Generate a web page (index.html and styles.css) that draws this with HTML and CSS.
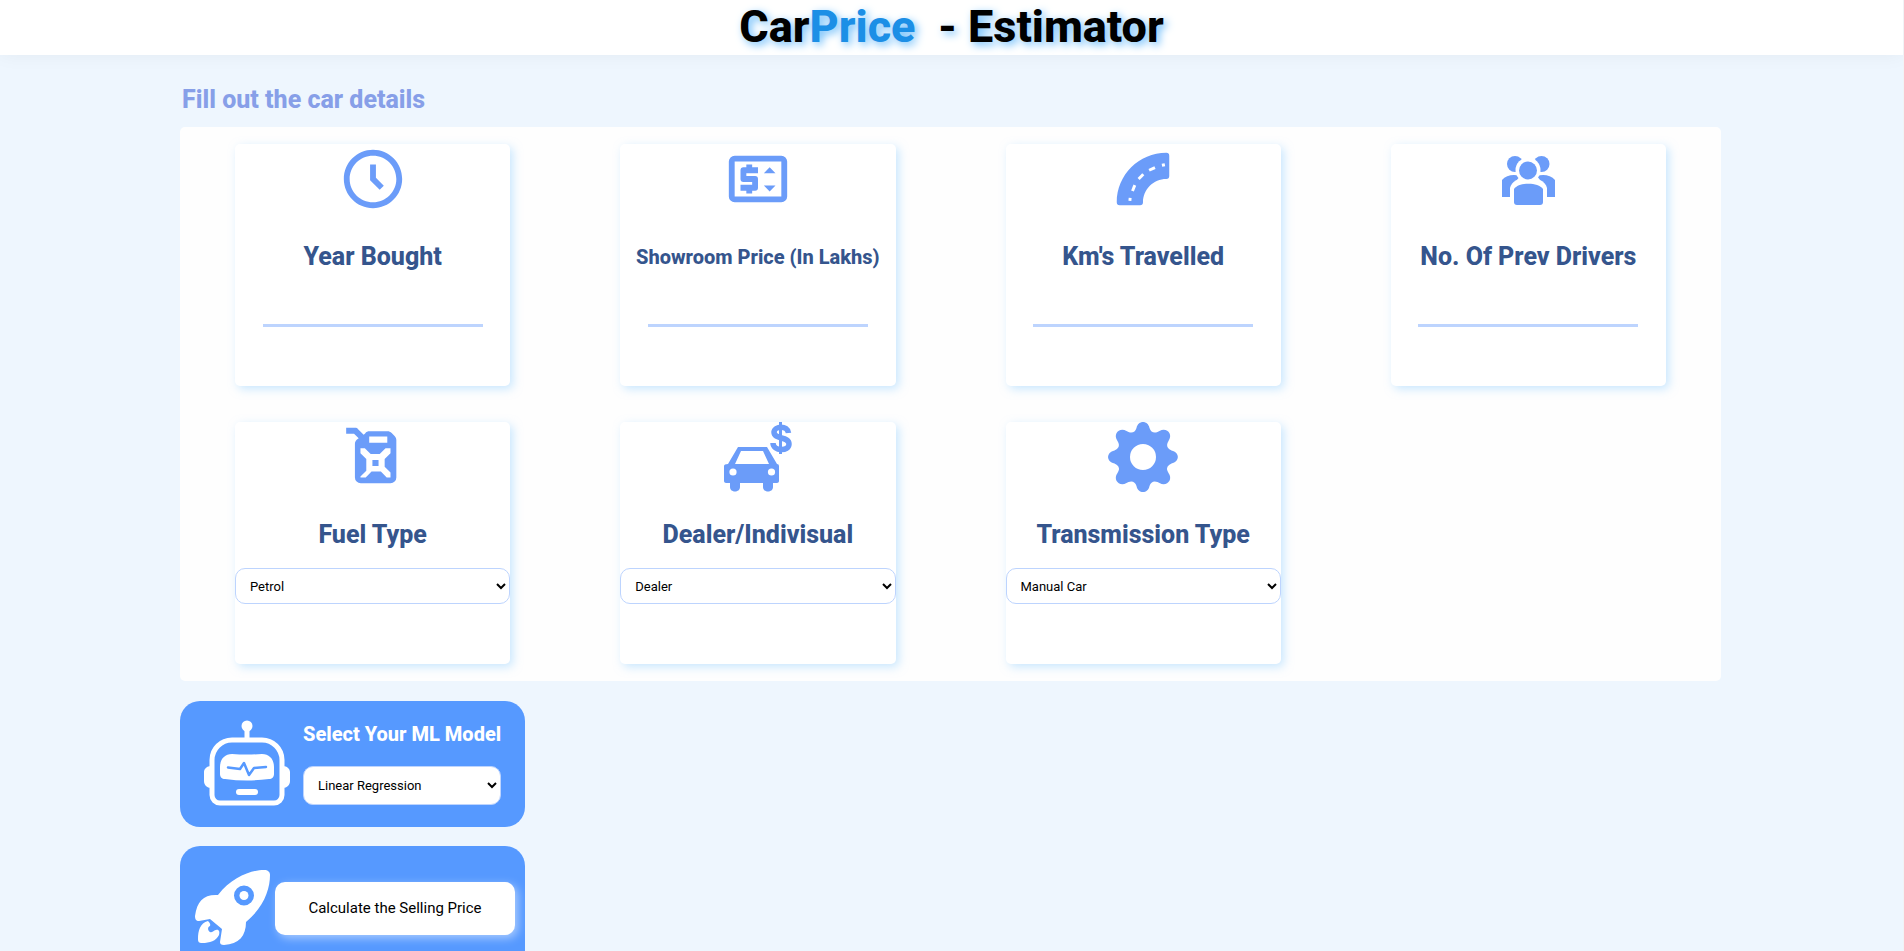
FILE: index.html
```html
<!DOCTYPE html>
<html lang="en">
<head>
<meta charset="utf-8">
<meta name="viewport" content="width=device-width, initial-scale=1">
<title>CarPrice - Estimator</title>
<link rel="stylesheet" href="styles.css">
</head>
<body>
<header class="header">
  <h1 class="brand">Car<span class="brand-accent">Price</span>&nbsp; - Estimator</h1>
</header>
<main class="content">
  <h2 class="section-title">Fill out the car details</h2>
  <form id="details" class="panel">
    <div class="card">
      <svg class="icon" viewBox="0 0 24 24" aria-hidden="true"><path d="M12 2C6.486 2 2 6.486 2 12s4.486 10 10 10 10-4.486 10-10S17.514 2 12 2zm0 18c-4.411 0-8-3.589-8-8s3.589-8 8-8 8 3.589 8 8-3.589 8-8 8z"/><path d="M13 7h-2v5.414l3.293 3.293 1.414-1.414L13 11.586z"/></svg>
      <label class="card-label" for="year">Year Bought</label>
      <input class="line-input" id="year" type="text">
    </div>
    <div class="card">
      <svg class="icon" viewBox="0 0 24 24" aria-hidden="true"><path fill-rule="evenodd" d="M4 4h16a2 2 0 0 1 2 2v12a2 2 0 0 1-2 2H4a2 2 0 0 1-2-2V6a2 2 0 0 1 2-2zm0 2v12h16V6z"/><path d="M8 17h2v-1h1a1 1 0 0 0 1-1v-3a1 1 0 0 0-1-1H8v-1h4V8h-2V7H8v1H7a1 1 0 0 0-1 1v3a1 1 0 0 0 1 1h3v1H6v2h2zM14 10l2-2 2 2zM14 14.25l2 2 2-2z"/></svg>
      <label class="card-label card-label-small" for="price">Showroom Price (In Lakhs)</label>
      <input class="line-input" id="price" type="text">
    </div>
    <div class="card">
      <svg class="icon" viewBox="0 0 24 24" aria-hidden="true"><path d="M20 3C10.600 3 3 10.600 3 20a1 1 0 0 0 1 1h7a1 1 0 0 0 1-1c0-4.400 3.600-8 8-8a1 1 0 0 0 1-1V4a1 1 0 0 0-1-1z"/><g class="road-marks"><path d="M7.500 19.500 7.600 18.500"/><path d="M8.400 16.100 9.200 14.100"/><path d="M10.500 12 12.100 10.400"/><path d="M14.100 9 16.100 8.100"/><path d="M18.500 7.300 19.500 7.100"/></g></svg>
      <label class="card-label" for="kms">Km's Travelled</label>
      <input class="line-input" id="kms" type="text">
    </div>
    <div class="card">
      <svg class="icon" viewBox="0 0 70 70" aria-hidden="true"><circle cx="22" cy="20" r="8"/><circle cx="48.500" cy="20" r="8"/><path d="M9 53V36c4-5 12-6 18-4l-6 8-4 5v8zM62 53V36c-4-5-12-6-18-4l6 8 4 5v8z"/><path class="cutout" d="M17 58V44c3-14 34-14 37 0v14z"/><circle class="cutout" cx="35" cy="26" r="12.500"/><circle cx="35" cy="26.500" r="9"/><path d="M21 45c5-7 24-7 29 0v13c0 2-1 3-3 3H24c-2 0-3-1-3-3z"/></svg>
      <label class="card-label" for="drivers">No. Of Prev Drivers</label>
      <input class="line-input" id="drivers" type="text">
    </div>
    <div class="card">
      <svg class="icon" viewBox="0 0 24 24" aria-hidden="true"><path fill-rule="evenodd" d="M2.800 2h3.100c.400 0 .700.100.900.400l2 2 .500-.500c.400-.500.900-.700 1.500-.700h6.200c.500 0 1 .200 1.400.600l1 1c.400.400.600.900.600 1.400V19a2 2 0 0 1-2 2H7.800a2 2 0 0 1-2-2V7.600c0-.600.200-1.100.600-1.500l.700-.500L5.500 4H2.800zM10.700 5v2.100h6.200V5zM9.300 9H7.700v1.700l2 2v4l-2 2V19h1.800l2-2h3.200l2 2h1.300v-1.700l-2-2v-2.600l2-2V9h-1.700l-2 2h-3.100l-2-2z"/><path d="M11.800 13h2.100v2.100h-2.100z"/></svg>
      <label class="card-label" for="fuel">Fuel Type</label>
      <select class="select" id="fuel"><option>Petrol</option><option>Diesel</option><option>CNG</option></select>
    </div>
    <div class="card">
      <svg class="icon" viewBox="0 0 70 70" aria-hidden="true"><path fill-rule="evenodd" d="M16 25h28l10 17q2 0 2 2v15c0 1-1 2-2 2h-4v4c0 6-10 6-10 0v-4H17v4c0 6-10 6-10 0v-4H3c-1 0-2-1-2-2V44q0-2 4-2l10-17zm2 4-6 13h34l-6-13z"/><circle class="cutout" cx="10" cy="50" r="3.600"/><circle class="cutout" cx="48.500" cy="50" r="3.600"/><path class="dollar" d="M65.500 11c-1-8-14-7-14.500-1 0 8 15 4 15 12 0 8-16 7-16-1"/><path class="dollar-bar" d="M57.500 0v32"/></svg>
      <label class="card-label" for="seller">Dealer/Indivisual</label>
      <select class="select" id="seller"><option>Dealer</option><option>Individual</option></select>
    </div>
    <div class="card">
      <svg class="icon" viewBox="0 0 70 70" aria-hidden="true"><path fill-rule="evenodd" d="M28.500 6C30-2 40-2 41.500 6q2 6 8 4l2-1c7-4 14 3 9 10l-1 2q-2 5 4 7.500C72 30 72 40 63.500 41.500q-6 2.500-4 7.500l1 2c5 7-2 14-9 10l-2-1q-6-2-8 4C40 72 30 72 28.500 64q-2-6-8-4l-2 1c-7 4-14-3-9-10l1-2q2-5-4-7.500C-2 40-2 30 6.500 28.500q6-2.500 4-7.500l-1-2c-5-7 2-14 9-10l2 1q6 2 8-4zM35 22a13 13 0 1 0 0 26 13 13 0 0 0 0-26z"/></svg>
      <label class="card-label" for="transmission">Transmission Type</label>
      <select class="select" id="transmission"><option>Manual Car</option><option>Automatic Car</option></select>
    </div>
  </form>
  <section class="action model">
    <svg class="action-icon robot" viewBox="0 0 86 86" aria-hidden="true"><circle cx="43" cy="6" r="5.500"/><path d="M40.500 8h5v12h-5zM7 46c-4 0-7 3-7 6v9c0 4 3 7 7 7zM79 46c4 0 7 3 7 6v9c0 4-3 7-7 7z"/><path class="robot-face" d="M8 40a20 20 0 0 1 20-20h30a20 20 0 0 1 20 20v35a8 8 0 0 1-8 8H16a8 8 0 0 1-8-8z"/><path d="M28 34q15 1 30 0c8 0 12 6 12 13v7c0 3-2 5-5 5q-22 3-44 0c-3 0-5-2-5-5v-7c0-7 4-13 12-13z"/><rect x="32" y="69" width="22" height="6" rx="3"/><path class="pulse" d="M24 47.500 36 49l4-6 5 12 5-7 12-1"/></svg>
    <div class="model-fields">
      <label class="model-label" for="model">Select Your ML Model</label>
      <select class="select model-select" id="model" form="details"><option>Linear Regression</option><option>Random Forest</option></select>
    </div>
  </section>
  <section class="action launch">
    <svg class="action-icon rocket" viewBox="0 0 76 76" aria-hidden="true"><path fill-rule="evenodd" d="M23 25C37 7 57 0 69 0c4 0 6 2 6 5 0 14-6 32-24 47 0 14-7 22-22 23-3 0-4-1-4-3l2-13-12-10-11 2C1 51 0 49 0 46c2-15 9-22 23-21zM49 15.500a10 10 0 1 0 0 20 10 10 0 0 0 0-20z"/><circle cx="49" cy="25.500" r="4.500"/><path d="M13 51c1 1 3 3 2 5-3 1-2 5 0 6 3 1 4-2 6-2 3-1 4 2 3 5-3 6-9 8-17 8-3 0-4-1-4-4 0-8 2-16 10-18z"/></svg>
    <button class="calc-button" type="submit" form="details">Calculate the Selling Price</button>
  </section>
</main>
</body>
</html>
```
FILE: styles.css
```css
* { box-sizing: border-box; }

body {
  margin: 0;
  background: #eef6fe;
  border-right: 1px solid #f1f3f5;
  font-family: Roboto, "Liberation Sans", sans-serif;
}

.header {
  height: 55px;
  background: #fff;
  box-shadow: 0 0 20px rgba(0, 0, 0, 0.05);
  text-align: center;
}

.brand {
  margin: 0;
  color: #000;
  font-size: 45px;
  font-weight: 800;
  line-height: 53px;
  text-shadow: 3px 3px 8px #6cbcfa;
}

.brand-accent { color: #1c8fe6; }

.content {
  margin: 0 182px 0 180px;
  padding-bottom: 48px;
}

.section-title {
  margin: 0;
  padding: 30px 2px 12px;
  color: #879fe8;
  font-size: 25px;
  font-weight: 800;
  line-height: 30px;
}

.panel {
  display: grid;
  grid-template-columns: repeat(4, 1fr);
  gap: 36px 110px;
  padding: 17px 55px;
  background: #fefefe;
  border-radius: 5px;
}

.card {
  display: flex;
  flex-direction: column;
  align-items: center;
  min-height: 242px;
  background: #fff;
  border-radius: 5px;
  box-shadow: 3px 3px 10px rgba(150, 210, 255, 0.5);
}

.icon {
  width: 70px;
  height: 70px;
  fill: #6b9cf9;
  overflow: visible;
}

.cutout { fill: #fff; }

.road-marks {
  fill: none;
  stroke: #fff;
  stroke-width: 1;
}

.dollar {
  fill: none;
  stroke: #6b9cf9;
  stroke-width: 5.5;
}

.dollar-bar {
  stroke: #6b9cf9;
  stroke-width: 3;
}

.card-label {
  margin-top: 28px;
  color: #35558d;
  font-size: 25px;
  font-weight: 800;
  line-height: 30px;
}

.card-label-small { font-size: 20px; }

.line-input {
  width: 80%;
  height: 36px;
  margin-top: 19px;
  border: 0;
  border-bottom: 3px solid #bdd4fe;
  background: transparent;
  text-align: center;
  font: 16px Roboto, sans-serif;
  outline: 0;
}

.select {
  width: 100%;
  height: 36px;
  margin-top: 18px;
  padding: 0 10px;
  border: 1px solid #bdd4fe;
  border-radius: 10px;
  background: #fff;
  color: #000;
  font: 13px Roboto, sans-serif;
}

.action {
  display: flex;
  align-items: center;
  width: 345px;
  background: #5699ff;
  border-radius: 20px;
}

.action-icon {
  flex: none;
  fill: #fff;
}

.model {
  gap: 13px;
  min-height: 126px;
  margin-top: 20px;
  padding: 0 24px 2px;
}

.robot {
  width: 86px;
  height: 86px;
}

.robot-face {
  fill: none;
  stroke: #fff;
  stroke-width: 5;
}

.pulse {
  fill: none;
  stroke: #5699ff;
  stroke-width: 2.5;
  stroke-linecap: round;
  stroke-linejoin: round;
}

.model-fields {
  display: flex;
  flex: 1;
  flex-direction: column;
}

.model-label {
  color: #fff;
  font-size: 20px;
  font-weight: 800;
  line-height: 24px;
  white-space: nowrap;
}

.model-select {
  height: 39px;
  margin-top: 20px;
}

.launch {
  gap: 4px;
  min-height: 126px;
  margin-top: 19px;
  padding: 0 10px 2px 15px;
}

.rocket {
  width: 76px;
  height: 76px;
}

.calc-button {
  flex: 1;
  height: 53px;
  padding: 0;
  border: 0;
  border-radius: 10px;
  background: #fff;
  box-shadow: 3px 3px 10px rgba(255, 255, 255, 0.5);
  color: #000;
  font: 15px Roboto, sans-serif;
}
```
